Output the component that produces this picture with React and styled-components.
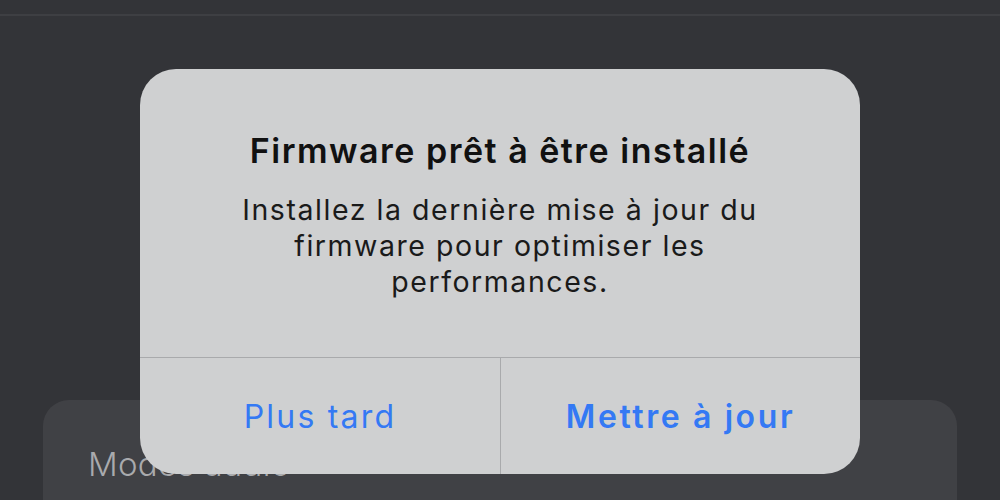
import React from 'react';
import styled, { createGlobalStyle } from 'styled-components';

const Global = createGlobalStyle`
  html, body {
    margin: 0;
    padding: 0;
    background: #333438;
  }
  * { box-sizing: border-box; }
`

const Page = styled.div`
  position: relative;
  width: 1000px;
  height: 500px;
  overflow: hidden;
  background: #333438;
  font-family: Inter, "Noto Sans", sans-serif;
`

const TopBar = styled.div`
  height: 16px;
  border-bottom: 2px solid #3e3f43;
`

const Content = styled.div`
  padding: 384px 43px 0 43px;
`

const Card = styled.div`
  background: #404145;
  border-radius: 26px;
  height: 200px;
  padding: 44px 45px;
`

const CardTitle = styled.div`
  color: #a9aaad;
  font-size: 33px;
  font-weight: 300;
  letter-spacing: 0.3px;
`

const Dialog = styled.div`
  position: absolute;
  left: 140px;
  top: 69px;
  width: 720px;
  height: 405px;
  border-radius: 36px;
  background: #cfd0d1;
  display: flex;
  flex-direction: column;
  overflow: hidden;
`

const Body = styled.div`
  height: 288px;
  padding-top: 62px;
  text-align: center;
  color: #111;
`

const Title = styled.div`
  font-size: 34px;
  font-weight: 600;
  line-height: 40px;
  letter-spacing: 1.5px;
`

const Message = styled.div`
  font-size: 28.5px;
  font-weight: 400;
  line-height: 36px;
  letter-spacing: 1.55px;
  color: #1a1a1a;
  margin: 21px auto 0;
  width: 580px;
`

const Actions = styled.div`
  flex: 1;
  display: grid;
  grid-template-columns: 1fr 1fr;
  border-top: 1.5px solid #a9aaac;
`

const Action = styled.div`
  display: flex;
  align-items: center;
  justify-content: center;
  color: #3479f4;
  font-size: 32px;
  font-weight: ${p => (p.$primary ? 600 : 400)};
  letter-spacing: ${p => (p.$primary ? '2.6px' : '2.2px')};
  padding-top: 1px;
  & + & {
    border-left: 1.5px solid #a9aaac;
  }
`

export default function App() {
  return (
    <Page>
      <Global />
      <TopBar />
      <Content>
        <Card>
          <CardTitle>Modes audio</CardTitle>
        </Card>
      </Content>
      <Dialog>
        <Body>
          <Title>Firmware prêt à être installé</Title>
          <Message>
            Installez la dernière mise à jour du firmware pour optimiser les performances.
          </Message>
        </Body>
        <Actions>
          <Action>Plus tard</Action>
          <Action $primary>Mettre à jour</Action>
        </Actions>
      </Dialog>
    </Page>
  )
}
